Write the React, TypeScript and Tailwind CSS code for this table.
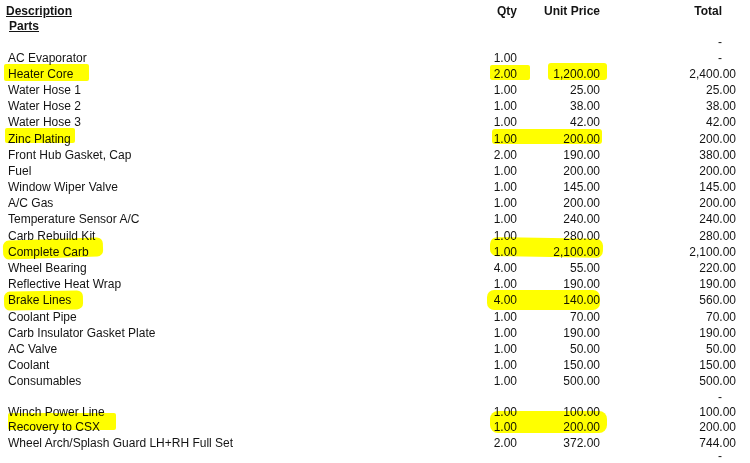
import React from 'react';

type Row = {
  desc: string;
  qty?: string;
  price?: string;
  total?: string;
  hl?: string[];
};

const items: Row[] = [
  { desc: 'AC Evaporator', qty: '1.00', total: '-' },
  {
    desc: 'Heater Core', qty: '2.00', price: '1,200.00', total: '2,400.00',
    hl: ['left-[4px] top-[-2px] w-[85px] h-[17px] rounded-[2px]', 'left-[490px] top-[-1px] w-[40px] h-[15px] rounded-[2px]', 'left-[548px] top-[-3px] w-[59px] h-[17px] rounded-[3px]'],
  },
  { desc: 'Water Hose 1', qty: '1.00', price: '25.00', total: '25.00' },
  { desc: 'Water Hose 2', qty: '1.00', price: '38.00', total: '38.00' },
  { desc: 'Water Hose 3', qty: '1.00', price: '42.00', total: '42.00' },
  {
    desc: 'Zinc Plating', qty: '1.00', price: '200.00', total: '200.00',
    hl: ['left-[5px] top-[-2px] w-[70px] h-[15px] rounded-[2px]', 'left-[492px] top-[-1px] w-[110px] h-[15px] rounded-[3px]'],
  },
  { desc: 'Front Hub Gasket, Cap', qty: '2.00', price: '190.00', total: '380.00' },
  { desc: 'Fuel', qty: '1.00', price: '200.00', total: '200.00' },
  { desc: 'Window Wiper Valve', qty: '1.00', price: '145.00', total: '145.00' },
  { desc: 'A/C Gas', qty: '1.00', price: '200.00', total: '200.00' },
  { desc: 'Temperature Sensor A/C', qty: '1.00', price: '240.00', total: '240.00' },
  { desc: 'Carb Rebuild Kit', qty: '1.00', price: '280.00', total: '280.00' },
  {
    desc: 'Complete Carb', qty: '1.00', price: '2,100.00', total: '2,100.00',
    hl: ['left-[3px] top-[-5px] w-[100px] h-[19px] rounded-[6px] -rotate-2', 'left-[490px] top-[-6px] w-[113px] h-[19px] rounded-[7px] rotate-1'],
  },
  { desc: 'Wheel Bearing', qty: '4.00', price: '55.00', total: '220.00' },
  { desc: 'Reflective Heat Wrap', qty: '1.00', price: '190.00', total: '190.00' },
  {
    desc: 'Brake Lines', qty: '4.00', price: '140.00', total: '560.00',
    hl: ['left-[4px] top-[-1px] w-[79px] h-[19px] rounded-[6px] -rotate-1', 'left-[487px] top-[-2px] w-[113px] h-[20px] rounded-[7px]'],
  },
  { desc: 'Coolant Pipe', qty: '1.00', price: '70.00', total: '70.00' },
  { desc: 'Carb Insulator Gasket Plate', qty: '1.00', price: '190.00', total: '190.00' },
  { desc: 'AC Valve', qty: '1.00', price: '50.00', total: '50.00' },
  { desc: 'Coolant', qty: '1.00', price: '150.00', total: '150.00' },
  { desc: 'Consumables', qty: '1.00', price: '500.00', total: '500.00' },
];

const tail: Row[] = [
  { desc: '', total: '-' },
  { desc: 'Winch Power Line', qty: '1.00', price: '100.00', total: '100.00' },
  {
    desc: 'Recovery to CSX', qty: '1.00', price: '200.00', total: '200.00',
    hl: ['left-[8px] top-[-7px] w-[108px] h-[17px] rounded-[2px]', 'left-[490px] top-[-9px] w-[117px] h-[22px] rounded-[8px]'],
  },
  { desc: 'Wheel Arch/Splash Guard LH+RH Full Set', qty: '2.00', price: '372.00', total: '744.00' },
];

const LineRow: React.FC<{ row: Row; h: string }> = ({ row, h }) => (
  <div className={`relative flex items-center ${h}`}>
    {row.hl?.map((c) => (
      <span key={c} className={`absolute z-10 bg-[#ffff00] mix-blend-multiply ${c}`} />
    ))}
    <div className="w-[440px] pl-[8px] whitespace-nowrap">{row.desc}</div>
    <div className="w-[77px] text-right">{row.qty}</div>
    <div className="w-[83px] text-right">{row.price}</div>
    <div className={`w-[136px] text-right ${row.total === '-' ? 'pr-[14px]' : ''}`}>{row.total}</div>
  </div>
);

export default function App() {
  return (
    <div
      className="isolate w-[750px] h-[463px] overflow-hidden bg-white pt-[3px] text-[12px] leading-[14px] text-[#141414]"
      style={{ fontFamily: '"Liberation Sans", Arial, sans-serif' }}
    >
      <div className="flex items-center h-[15.5px] font-bold">
        <div className="w-[440px] pl-[6px]"><span className="underline underline-offset-[1px]">Description</span></div>
        <div className="w-[77px] text-right">Qty</div>
        <div className="w-[83px] text-right">Unit Price</div>
        <div className="w-[136px] text-right pr-[14px]">Total</div>
      </div>
      <div className="flex items-center h-[15.5px] font-bold">
        <div className="pl-[9px]"><span className="underline underline-offset-[1px]">Parts</span></div>
      </div>
      <LineRow row={{ desc: '', total: '-' }} h="h-[15.5px]" />
      {items.map((r, i) => (
        <LineRow key={i} row={r} h="h-[16.2px]" />
      ))}
      {tail.map((r, i) => (
        <LineRow key={'t' + i} row={r} h="h-[15.2px]" />
      ))}
      <div className="flex justify-end items-start h-[12px] pr-[28px] leading-[12px]">-</div>
    </div>
  );
}
